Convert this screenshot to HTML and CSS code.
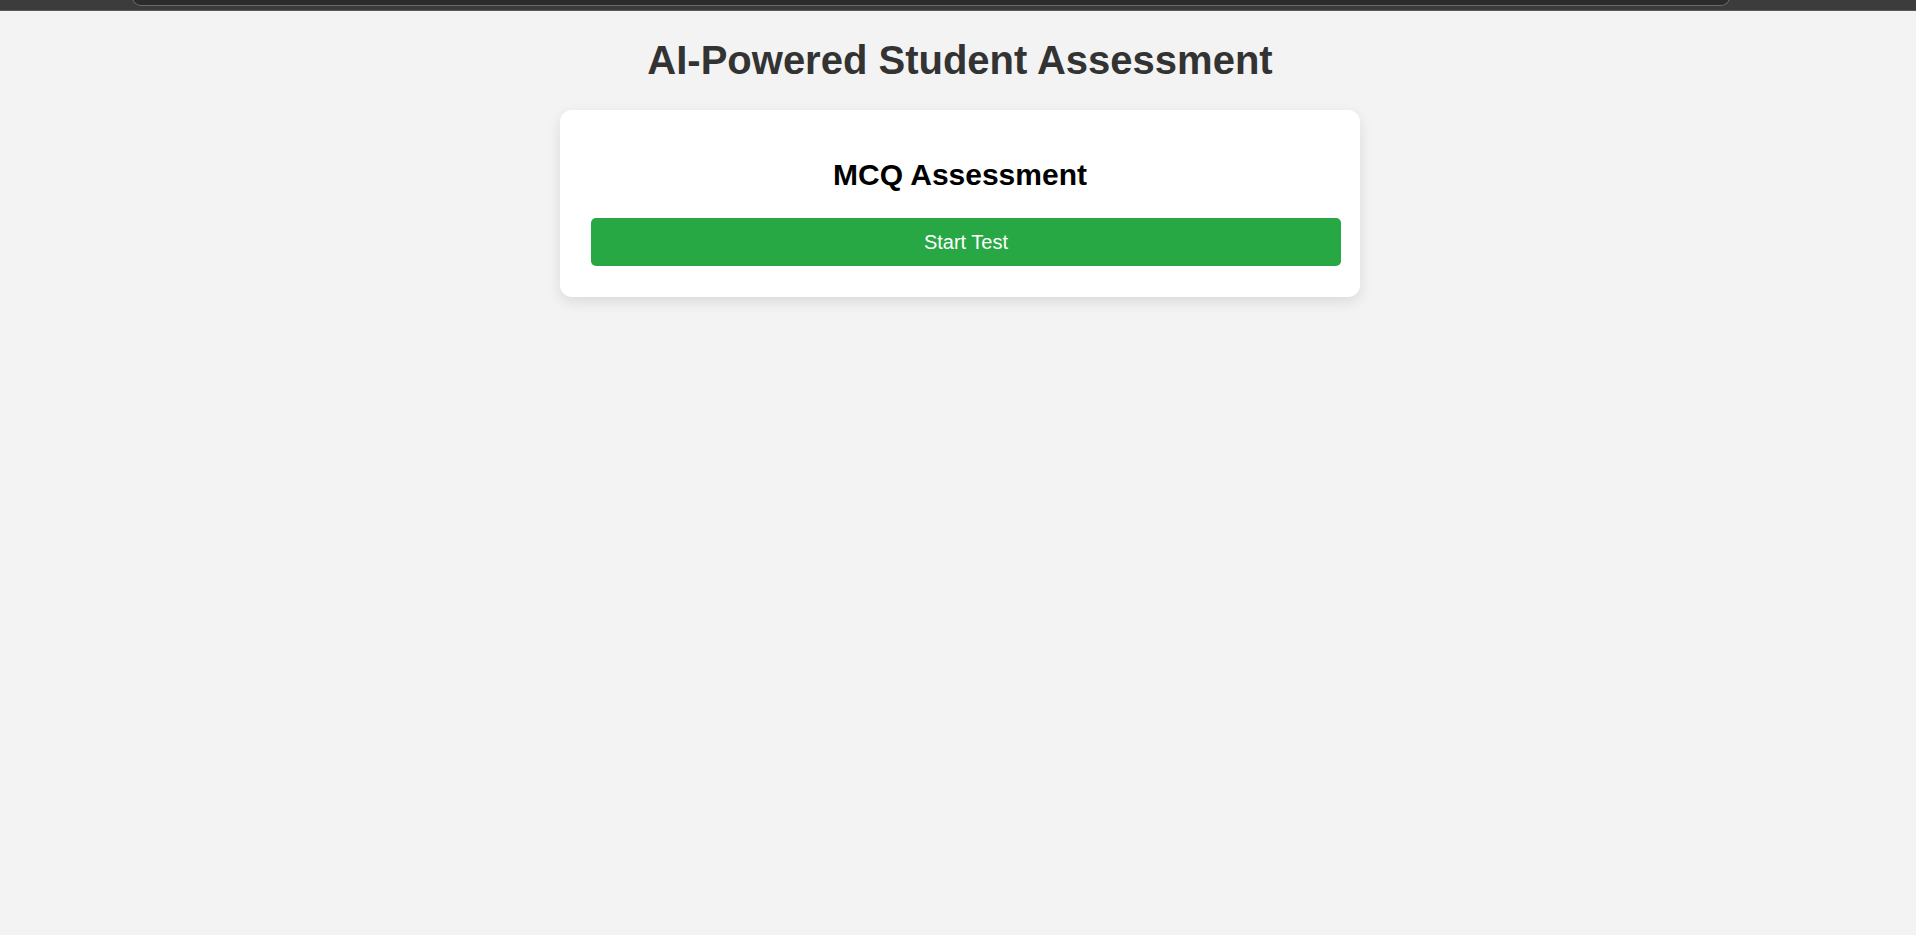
FILE: index.html
```html
<!DOCTYPE html>
<html lang="en">
<head>
<meta charset="utf-8">
<title>AI-Powered Student Assessment</title>
<link rel="stylesheet" href="styles.css">
</head>
<body>
<div class="chrome">
  <div class="chrome-field"></div>
</div>
<main class="page">
  <h1 class="title">AI-Powered Student Assessment</h1>
  <section class="card">
    <h2 class="card-title">MCQ Assessment</h2>
    <button class="start-btn" type="button">Start Test</button>
  </section>
</main>
</body>
</html>
```
FILE: styles.css
```css
* { box-sizing: border-box; }

html, body {
  margin: 0;
  padding: 0;
  background: #f3f3f3;
  font-family: "Liberation Sans", Arial, sans-serif;
  min-height: 100vh;
}

.chrome {
  height: 11px;
  background: #3c3c3c;
  border-bottom: 1px solid #5a5a5a;
  padding: 0 186px 0 132px;
  overflow: hidden;
}

.chrome-field {
  height: 5px;
  margin-top: -10px;
  padding-top: 10px;
  box-sizing: content-box;
  background: #2c2c2c;
  border: 1px solid #6a6a6a;
  border-top: none;
  border-radius: 0 0 9px 9px;
}

.page {
  padding: 26px 0 40px 4px;
}

.title {
  margin: 0 0 27px;
  text-align: center;
  font-size: 40px;
  line-height: 46px;
  font-weight: bold;
  color: #333333;
}

.card {
  width: 800px;
  margin: 0 auto;
  background: #ffffff;
  border-radius: 12px;
  box-shadow: 0 5px 14px rgba(0, 0, 0, 0.1);
  padding: 25px 19px 31px 31px;
}

.card-title {
  margin: 23px 0 26px;
  text-align: center;
  font-size: 30px;
  line-height: 34px;
  font-weight: bold;
  color: #000000;
  padding-right: 12px;
}

.start-btn {
  display: block;
  width: 100%;
  height: 48px;
  border: none;
  border-radius: 5px;
  background: #28a745;
  color: #ffffff;
  font-family: "Liberation Sans", Arial, sans-serif;
  font-size: 20px;
  cursor: pointer;
}
```
